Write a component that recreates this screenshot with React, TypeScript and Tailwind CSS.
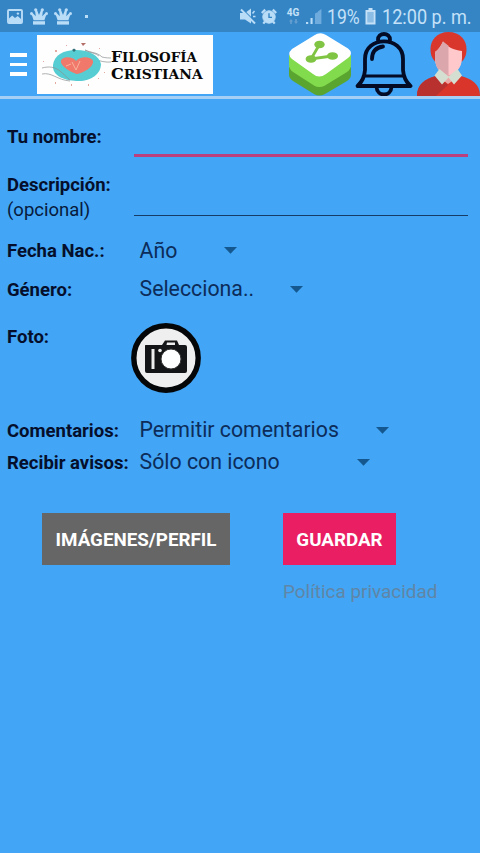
import type { ReactNode } from "react";

interface SpinnerProps {
  value: string;
  width: string;
}

interface FieldRowProps {
  label: string;
  height: string;
  children: ReactNode;
}

function Spinner({ value, width }: SpinnerProps) {
  return (
    <button className={`flex items-center justify-between text-left text-[21.3px] leading-6 text-[#0c2c5a] ${width}`}>
      <span className="whitespace-nowrap">{value}</span>
      <svg viewBox="0 0 13 7" className="w-[13px] h-[7px]">
        <path d="M0 0H13L6.5 6.8Z" fill="#14588f" />
      </svg>
    </button>
  );
}

function FieldRow({ label, height, children }: FieldRowProps) {
  return (
    <div className={`flex items-center ${height}`}>
      <span className="w-[132.5px] shrink-0 whitespace-nowrap pt-px text-[18.5px] leading-6 font-bold text-[#050f2c]">{label}</span>
      {children}
    </div>
  );
}

function Crown() {
  return (
    <svg viewBox="0 0 18 17" className="w-[18px] h-[17px]" fill="#b9dcf7">
      <path d="M3.6 12.2 2.2 8 1 6.4 2.6 5 5.8 8.2 5 2.6 7 2 9 7 11 2 13 2.6 12.2 8.2 15.4 5 17 6.4 15.8 8 14.4 12.2Z" />
      <path d="M3 13.2H15V16.6H3Z" />
      <circle cx="1.5" cy="5.4" r="1.5" />
      <circle cx="5.7" cy="1.8" r="1.6" />
      <circle cx="12.3" cy="1.8" r="1.6" />
      <circle cx="16.5" cy="5.4" r="1.5" />
    </svg>
  );
}

function StatusBar() {
  return (
    <div className="flex h-8 items-center justify-between bg-[#3585c5] pl-[7px] pr-[9px] text-[#c4e1f8]">
      <div className="flex items-center">
        <svg viewBox="0 0 16 15" className="w-4 h-[15px]" fill="none">
          <rect x="1" y="1" width="14" height="13" rx="1" stroke="#b9dcf7" strokeWidth="1.9" />
          <path d="M2 13V9.5L5.2 6.6 8 9 10.7 7 14 10V13Z" fill="#b9dcf7" />
          <circle cx="10.9" cy="4.6" r="1.2" fill="#b9dcf7" />
        </svg>
        <div className="ml-[7px] flex gap-[6px]">
          <Crown />
          <Crown />
        </div>
        <span className="ml-[13px] size-[3px] bg-[#b9dcf7]" />
      </div>

      <div className="flex items-center">
        <svg viewBox="0 0 16 17" className="w-4 h-[17px]">
          <path d="M0 5H5L11 .5V15.5L5 11.5H0Z" fill="#b9dcf7" />
          <path d="M12.5 5.5 14.5 3M13 8.5H15.5" stroke="#b9dcf7" strokeWidth="1.5" />
          <path d="M2.5 1.2 15.5 14.2" stroke="#3585c5" strokeWidth="1.2" />
          <path d="M1 1.5 15 15.5" stroke="#b9dcf7" strokeWidth="2" />
        </svg>
        <svg viewBox="0 0 16 17" className="ml-[5px] w-4 h-[17px]" fill="none" stroke="#b9dcf7">
          <circle cx="8" cy="9" r="6.2" fill="#b9dcf7" strokeWidth="1" />
          <path d="M.8 5 4.2 1.6M15.2 5 11.8 1.6M4 13.5 2.3 15.6M12 13.5 13.7 15.6" strokeWidth="2.2" />
          <path d="M8 5.2V9.4H11" stroke="#3585c5" strokeWidth="1.4" />
        </svg>
        <div className="ml-[9px] flex w-[14px] flex-col items-center">
          <span className="text-[10px] font-bold leading-[10px]">4G</span>
          <svg viewBox="0 0 9 5" className="mt-px w-[9px] h-[5px]" fill="#669fd0">
            <path d="M0 2.5 2 0 4 2.5H2.8V5H1.2V2.5ZM5 2.5H6.2V0H7.8V2.5H9L7 5Z" />
          </svg>
        </div>
        <svg viewBox="0 0 17 17" className="ml-[5px] w-[17px] h-[17px]">
          <path d="M1 14H3.2V16H1ZM5.5 10H7.6V16H5.5Z" fill="#b9dcf7" />
          <path d="M10 5.5 13 4V16H10ZM13 3.6 16.4 1V16H13Z" fill="#70abdd" />
        </svg>
        <span className="ml-[5px] w-[33px] whitespace-nowrap pt-px text-[20px] leading-6">
          <span className="inline-block origin-left scale-x-[0.88]">19%</span>
        </span>
        <svg viewBox="0 0 11 17" className="ml-[5px] w-[11px] h-[17px]">
          <path d="M3.5 0H7.5V2H10.5V16.5H.5V2H3.5Z" fill="#c4e1f8" />
          <path d="M2.3 4H8.7V14.5H2.3Z" fill="#8cbde5" />
        </svg>
        <span className="ml-[6px] w-[89px] whitespace-nowrap pt-px text-[20px] leading-6">
          <span className="inline-block origin-left scale-x-[0.905]">12:00 p. m.</span>
        </span>
      </div>
    </div>
  );
}

function Logo() {
  return (
    <div className="flex h-[59px] w-[176px] bg-[#fefefe]">
      <svg viewBox="0 0 74 59" className="w-[74px] h-[59px] shrink-0" fill="none">
        <path d="M48 15C54 18 60 17 65 22C69 23 72 23 76 23M48 17C55 22 61 28 75 27" stroke="#8c8f91" strokeWidth=".7" />
        <path d="M16 30C17 20 27 15 39 15C53 15 62 21 64 29C64 39 54 46 42 46C29 46 15 42 16 30Z" fill="#56cdd2" />
        <path d="M40 39C35 38 23 31 24 26C25 21 36 21 39 26C43 21 54 21 56 26C57 32 46 38 40 39Z" fill="#f0796b" />
        <path d="M35 27 39 35 43 26M29 31 34 29" stroke="#f9b29c" strokeWidth="1" />
        <path d="M5 33C12 31 18 32 23 36L33 45M5 39C15 37 20 45 33 46M48 15C53 18 59 18 62 21" stroke="#8c8f91" strokeWidth=".7" />
        <path d="M44 8H49L46 11Z" fill="#b66f68" />
        <path d="M18 15H20V17H18ZM29 10H30V11H29ZM6 26H7V27H6ZM18 47H19V49H18ZM34 49H35V51H34ZM51 49H52V51H51ZM67 37H68V38H67ZM61 43H62V44H61ZM62 13H63V14H62Z" fill="#e3aaa2" />
        <path d="M35 15 37 13.5 39 15 37 17Z" fill="#326f79" />
      </svg>
      <div className="h-[59px] w-[102px] pt-[14px] font-['DejaVu_Serif',serif] text-[13px] font-bold uppercase leading-[16.4px] text-[#080808]">
        <div className="w-fit origin-left scale-x-[1.03] whitespace-nowrap first-letter:text-[15px]">Filosofía</div>
        <div className="w-fit origin-left scale-x-[1.065] whitespace-nowrap first-letter:text-[15px]">Cristiana</div>
      </div>
    </div>
  );
}

function ShareIcon() {
  return (
    <svg viewBox="0 0 62 63" className="w-[62px] h-[63px]">
      <path d="M0 34H62V42Q62 45 58 48L36 61Q30 64 25 61L4 48Q0 45 0 42Z" fill="#59a52f" />
      <path d="M0 22H62V32Q62 36 58 39L36 52.5Q30 55.5 25 52.5L4 39Q0 36 0 32Z" fill="#82db4c" />
      <path d="M25 2.5Q31-1.5 37 2L59 15.5Q65 20 59 25L37 41Q30 46 24 41L3 26Q-2.5 21 3 16Z" fill="#fff" />
      <path d="M30.5 11.5 22 26 43 23" fill="none" stroke="#80c443" strokeWidth="2.8" />
      <g fill="#80c443">
        <ellipse cx="30.5" cy="11.5" rx="5.2" ry="3.8" />
        <ellipse cx="22" cy="26" rx="5.4" ry="3.8" />
        <ellipse cx="43.5" cy="23" rx="5.5" ry="3.8" />
      </g>
    </svg>
  );
}

function BellIcon() {
  return (
    <svg viewBox="0 0 58 64" className="w-[58px] h-[64px]" fill="none" stroke="#040b24" strokeWidth="3.8" strokeLinejoin="round" strokeLinecap="round">
      <path d="M23 8C22.5 0 35.500 0 35 8" />
      <path d="M2.5 54C7 50 9.5 45 10 38V27C10 3.500 48 3.500 48 27V38C48.5 45 51 50 55.5 54Z" />
      <path d="M9.5 44H48.5" strokeWidth="3" />
      <path d="M17 27Q17 16 28 14.5" />
      <path d="M21.5 55C22 65 36 65 36.5 55" />
    </svg>
  );
}

function UserIcon() {
  return (
    <svg viewBox="0 0 63 64" className="w-[63px] h-[64px]">
      <path d="M0 64C0 52 8 47 19 44H44C55 47 63 52 63 64Z" fill="#d9352b" />
      <path d="M0 64C0 52 8 47 19 44L31 53 19 64Z" fill="#b9312e" />
      <path d="M31.5 0C43 0 49.5 8 49.5 17C49.5 23 48 26 45 29.5H18C15 26 13.5 23 13.5 17C13.5 8 20 0 31.5 0Z" fill="#d9372c" />
      <path d="M22 36H41V45L31 52 22 45Z" fill="#eda9a8" />
      <path d="M18 20C21 18 24 14 26 9.5C31 15 36 18 45 19V26C45 36 38 43 31.500 43C24 43 18 36 18 26Z" fill="#ffc9cb" />
      <path d="M18 20C21 18 24 14 26 9.5L31.5 13.7V43C24 43 18 36 18 26Z" fill="#dba6ac" />
      <path d="M22.5 37 31.5 44.5 40.5 37 45 43.500 37 52.5 31.5 45.5 25 52.5 17.5 43.5Z" fill="#d5dfd1" />
    </svg>
  );
}

function Header() {
  return (
    <header className="flex h-[67px] items-start border-b-[3px] border-[#a5cff4] bg-[#42a5f5]">
      <button className="ml-[10px] mt-[21px] flex w-[17px] flex-col gap-[6px]">
        <span className="h-[3.5px] w-full bg-white" />
        <span className="h-[3.5px] w-full bg-white" />
        <span className="h-[3.5px] w-full bg-white" />
      </button>
      <div className="ml-[10px] mt-[3px]">
        <Logo />
      </div>
      <div className="ml-auto flex items-start">
        <div className="mt-px mr-[4px]">
          <ShareIcon />
        </div>
        <BellIcon />
        <div className="ml-[4px]">
          <UserIcon />
        </div>
      </div>
    </header>
  );
}

function CameraIcon() {
  return (
    <svg viewBox="0 0 70 70" className="-ml-2 w-[70px] h-[70px] shrink-0">
      <circle cx="35" cy="35" r="32.2" fill="#efefef" stroke="#050607" strokeWidth="5.4" />
      <path d="M14.500 22H31L34 17.5H46L48 22H54Q56 22 56 24V48Q56 50 54 50H16Q14 50 14 48V22.500Z" fill="#141516" />
      <path d="M36 19.500H44V22H35.500Z" fill="#eee" />
      <path d="M20.500 26H23.500V46H20.500Z" fill="#eee" />
      <circle cx="29" cy="27.5" r="1.8" fill="#eee" />
      <circle cx="40" cy="36" r="10" fill="#fff" stroke="#343434" />
    </svg>
  );
}

export default function App() {
  return (
    <div className="flex h-[853px] w-[480px] flex-col overflow-hidden bg-[#42a5f5] font-['Roboto',sans-serif]">
      <StatusBar />
      <Header />

      <main className="flex flex-col pl-[7px]">
        <div className="flex h-[64px]">
          <label className="w-[127px] pt-[26px] text-[18.5px] leading-6 font-bold text-[#050f2c]">Tu nombre:</label>
          <input className="h-[58px] w-[334px] border-b-[3px] border-[#bb3f7f] bg-transparent outline-none" />
        </div>

        <div className="flex h-[68px]">
          <label className="w-[127px] pt-[10px] text-[18.5px] leading-[25px] text-[#071a3c]">
            <span className="block font-bold text-[#050f2c]">Descripción:</span>
            <span className="block">(opcional)</span>
          </label>
          <input className="h-[53px] w-[334px] border-b-[1.5px] border-[#173d67] bg-transparent outline-none" />
        </div>

        <FieldRow label="Fecha Nac.:" height="h-[39px]">
          <Spinner value="Año" width="w-[97.5px]" />
        </FieldRow>
        <FieldRow label="Género:" height="h-[38px]">
          <Spinner value="Selecciona.." width="w-[163.5px]" />
        </FieldRow>

        <div className="mt-[15px] flex h-[91px] items-start">
          <span className="w-[132px] pt-[2px] text-[18.5px] leading-6 font-bold text-[#050f2c]">Foto:</span>
          <CameraIcon />
        </div>

        <FieldRow label="Comentarios:" height="h-[32px]">
          <Spinner value="Permitir comentarios" width="w-[249.5px]" />
        </FieldRow>
        <FieldRow label="Recibir avisos:" height="h-[32px]">
          <Spinner value="Sólo con icono" width="w-[230.5px]" />
        </FieldRow>

        <div className="mt-[35px] ml-[35px] flex items-start gap-[53px]">
          <button className="h-[52px] w-[188px] bg-[#666] pt-[2px] text-[18.8px] font-bold text-white">IMÁGENES/PERFIL</button>
          <div className="flex flex-col items-start">
            <button className="h-[52px] w-[113px] bg-[#e91e63] pt-[2px] text-[18.8px] font-bold text-white">GUARDAR</button>
            <a className="mt-[15px] whitespace-nowrap text-[18.9px] leading-6 text-[#6085a6]">Política privacidad</a>
          </div>
        </div>
      </main>
    </div>
  );
}
